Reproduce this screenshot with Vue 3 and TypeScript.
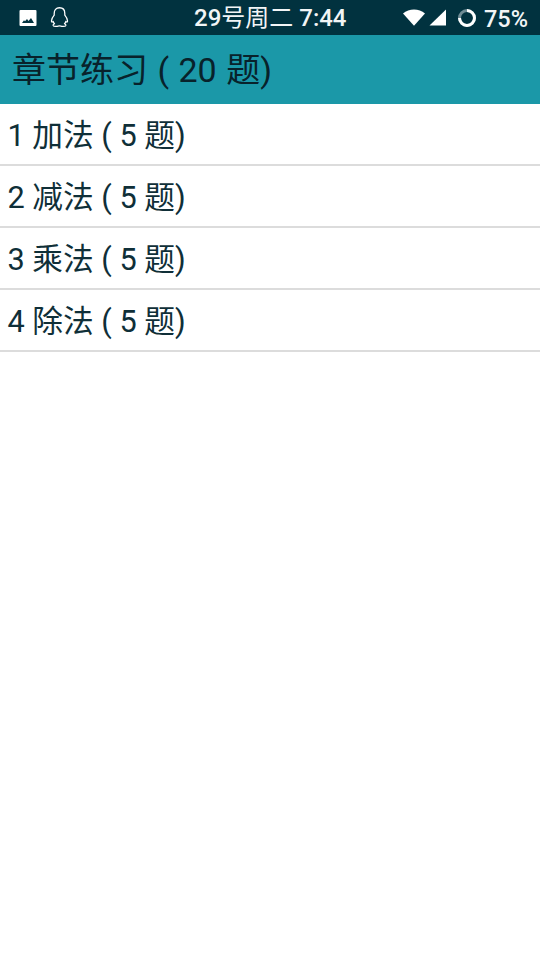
<script setup lang="ts">
const rows: string[] = ['1 加法 ( 5 题)', '2 减法 ( 5 题)', '3 乘法 ( 5 题)', '4 除法 ( 5 题)']
</script>

<template>
  <div class="page">
    <div class="status">
      <div class="left">
        <svg width="18" height="18" viewBox="0 0 18 18">
          <path fill="#fff" fill-rule="evenodd" d="M1.500 1h15a1 1 0 0 1 1 1v14a1 1 0 0 1-1 1h-15a1 1 0 0 1-1-1V2a1 1 0 0 1 1-1zM3 14h12l-3-5-2.500 3-1.500-2-2 2.200-1-1z" />
        </svg>
        <svg width="19" height="21" viewBox="1.500 0.800 17 19.800">
          <path fill="none" stroke="#fff" stroke-width="1.200" stroke-linejoin="round" d="M10 1.500c3.400 0 5 2.600 5 5.400v1.600c1.200 1.400 2.600 3.800 2.600 5.600 0 1.100-.7 1.200-1.600.2-.2 1-.7 1.700-1.300 2.300 1 .4 1.500 1 1.300 1.600-.3.8-2 1-3.400.9-1-.1-1.700-.4-2.600-.4s-1.600.3-2.600.4c-1.400.1-3.100-.1-3.400-.9-.2-.6.3-1.200 1.300-1.600-.6-.6-1.100-1.300-1.300-2.300-.9 1-1.600.9-1.600-.2 0-1.800 1.400-4.200 2.600-5.600V6.900c0-2.800 1.600-5.400 5-5.400z" />
        </svg>
      </div>
      <div class="clock">29<span class="cjk">号周二</span> 7:44</div>
      <div class="right">
        <svg class="wifi" width="22" height="17" viewBox="0 0 22 17"><path fill="#fff" d="M0 4.500C3 2 7 .5 11 .5s8 1.500 11 4L11 16.800z" /></svg>
        <svg class="signal" width="17" height="17" viewBox="0 0 17 17"><path fill="#fff" d="M17 .5V16.500H.5z" /></svg>
        <svg class="ring" width="20" height="20" viewBox="0 0 20 20">
          <circle cx="10" cy="10" r="7.500" fill="none" stroke="#6f8c95" stroke-width="3" />
          <circle cx="10" cy="10" r="7.500" fill="none" stroke="#fff" stroke-width="3" pathLength="100" stroke-dasharray="75 25" transform="rotate(-90 10 10)" />
        </svg>
        <span class="pct">75%</span>
      </div>
    </div>
    <header class="bar">章节练习 ( 20 题)</header>
    <ul class="list">
      <li v-for="row in rows" :key="row" class="row">{{ row }}</li>
    </ul>
  </div>
</template>

<style scoped>
.page {
  width: 540px;
  height: 960px;
  background: #fff;
  font-family: Roboto, "Noto Sans CJK SC", sans-serif;
  overflow: hidden;
}
.status {
  height: 35px;
  background: #01323f;
  color: #f2f5f6;
  display: flex;
  align-items: center;
  justify-content: space-between;
  padding: 0 12px 0 19px;
  position: relative;
  box-sizing: border-box;
}
.left {
  display: flex;
  align-items: center;
  gap: 13px;
}
.clock {
  position: absolute;
  left: 194px;
  top: 0;
  line-height: 36px;
  font-size: 24px;
  font-weight: 500;
}
.cjk {
  font-weight: 400;
}
.right {
  display: flex;
  align-items: center;
}
.signal {
  margin-left: 4px;
}
.ring {
  margin-left: 11px;
}
.pct {
  font-size: 23.500px;
  line-height: 36px;
  font-weight: 500;
  margin-left: 7px;
  padding-top: 2px;
}
.bar {
  height: 69px;
  background: #1b98a8;
  color: #08222b;
  font-size: 34px;
  word-spacing: 1px;
  line-height: 70px;
  padding-left: 12px;
  box-sizing: border-box;
}
.list {
  list-style: none;
  margin: 0;
  padding: 0;
}
.row {
  height: 62px;
  line-height: 63px;
  box-sizing: border-box;
  border-bottom: 2px solid #dcdcdc;
  font-size: 30.700px;
  color: #0f2f38;
  padding-left: 7.500px;
}
</style>
